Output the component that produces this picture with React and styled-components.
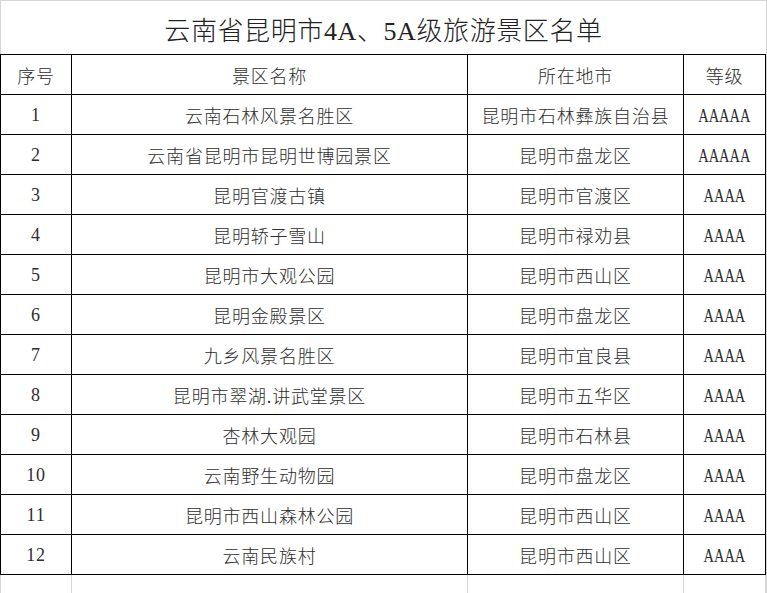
import React from 'react';
import styled, { createGlobalStyle } from 'styled-components';

const GlobalStyle = createGlobalStyle`
    html, body {
        margin: 0;
        padding: 0;
        background: #ffffff;
    }
    body {
        font-family: "Liberation Serif", "Noto Sans CJK SC", serif;
        color: #2a2a2a;
    }
`;

const GRID = '71px 396px 216px 82px';
const GRAY = '#d6d6d6';

const Sheet = styled.div`
    width: 767px;
    height: 593px;
    box-sizing: border-box;
    border-right: 1px solid ${GRAY};
    overflow: hidden;
`;

const TitleRow = styled.div`
    height: 54px;
    box-sizing: border-box;
    border-top: 1px solid ${GRAY};
    border-left: 1px solid ${GRAY};
    display: flex;
    align-items: center;
    justify-content: center;
    font-size: 26px;
    font-weight: 300;
    letter-spacing: 0.6px;
    padding-top: 2px;
    color: #222222;
`;

const Table = styled.div`
    display: grid;
    grid-template-columns: ${GRID};
    border-top: 1px solid #000;
    border-left: 1px solid #000;
    width: 766px;
    box-sizing: border-box;
`;

const Cell = styled.div`
    height: 40px;
    box-sizing: border-box;
    border-right: 1px solid #000;
    border-bottom: 1px solid #000;
    display: flex;
    align-items: center;
    justify-content: center;
    font-size: 18px;
    font-weight: 300;
    letter-spacing: 0.8px;
    padding-top: ${p => (p.$latin ? '2px' : '0')};
    white-space: nowrap;
    color: #2e2e2e;
`;

const Grade = styled.span`
    display: inline-block;
    font-size: 19px;
    letter-spacing: 0;
    transform: scaleX(0.76);
`;

const Blank = styled.div`
    display: grid;
    grid-template-columns: ${GRID};
    border-left: 1px solid ${GRAY};
    width: 766px;
    box-sizing: border-box;
`;

const BlankCell = styled.div`
    height: 18px;
    border-right: 1px solid ${GRAY};
    border-bottom: 1px solid ${GRAY};
`;

const headers = ['序号', '景区名称', '所在地市', '等级'];

const rows = [
    ['1', '云南石林风景名胜区', '昆明市石林彝族自治县', 'AAAAA'],
    ['2', '云南省昆明市昆明世博园景区', '昆明市盘龙区', 'AAAAA'],
    ['3', '昆明官渡古镇', '昆明市官渡区', 'AAAA'],
    ['4', '昆明轿子雪山', '昆明市禄劝县', 'AAAA'],
    ['5', '昆明市大观公园', '昆明市西山区', 'AAAA'],
    ['6', '昆明金殿景区', '昆明市盘龙区', 'AAAA'],
    ['7', '九乡风景名胜区', '昆明市宜良县', 'AAAA'],
    ['8', '昆明市翠湖.讲武堂景区', '昆明市五华区', 'AAAA'],
    ['9', '杏林大观园', '昆明市石林县', 'AAAA'],
    ['10', '云南野生动物园', '昆明市盘龙区', 'AAAA'],
    ['11', '昆明市西山森林公园', '昆明市西山区', 'AAAA'],
    ['12', '云南民族村', '昆明市西山区', 'AAAA'],
];

const App = () => {
    return (
        <>
            <GlobalStyle />
            <Sheet>
                <TitleRow>云南省昆明市4A、5A级旅游景区名单</TitleRow>
                <Table>
                    {headers.map(h => (
                        <Cell key={h}>{h}</Cell>
                    ))}
                    {rows.map(r => (
                        <React.Fragment key={r[0]}>
                            <Cell $latin>{r[0]}</Cell>
                            <Cell>{r[1]}</Cell>
                            <Cell>{r[2]}</Cell>
                            <Cell $latin>
                                <Grade>{r[3]}</Grade>
                            </Cell>
                        </React.Fragment>
                    ))}
                </Table>
                <Blank>
                    <BlankCell />
                    <BlankCell />
                    <BlankCell />
                    <BlankCell />
                </Blank>
            </Sheet>
        </>
    );
};

export default App;
